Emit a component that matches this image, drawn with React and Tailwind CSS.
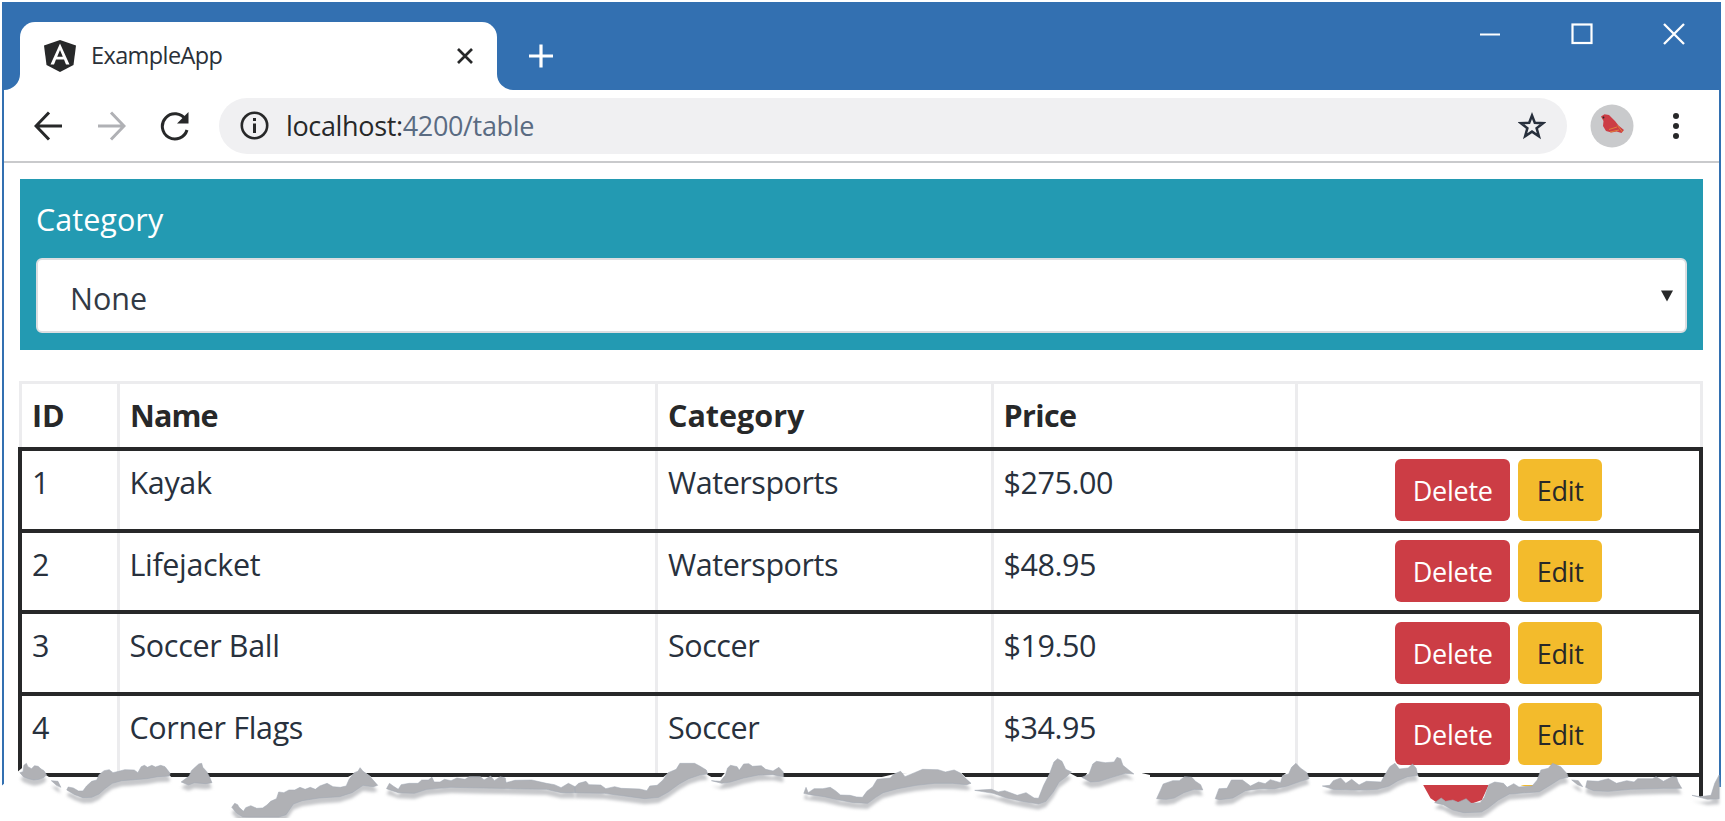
import React from "react";

const products = [
  { id: 1, name: "Kayak", category: "Watersports", price: "$275.00" },
  { id: 2, name: "Lifejacket", category: "Watersports", price: "$48.95" },
  { id: 3, name: "Soccer Ball", category: "Soccer", price: "$19.50" },
  { id: 4, name: "Corner Flags", category: "Soccer", price: "$34.95" },
];

function TitleBar() {
  return (
    <div className="flex h-[88px] items-start bg-[#3370b1]">
      <div className="relative ml-[18px] mt-5 flex h-[68px] w-[477px] items-center rounded-t-[15px] bg-white pl-[23px]">
        <svg className="absolute -left-[16px] bottom-0" width="16" height="16" viewBox="0 0 16 16">
          <path d="M16 0V16H0A16 16 0 0 0 16 0Z" fill="#fff" />
        </svg>
        <svg className="absolute -right-[16px] bottom-0" width="16" height="16" viewBox="0 0 16 16">
          <path d="M0 0V16H16A16 16 0 0 1 0 0Z" fill="#fff" />
        </svg>
        <svg width="34" height="34" viewBox="0 0 34 34">
          <path d="M17 1 33 6.5 30.5 26 17 33 3.500 26 1 6.500Z" fill="#272829" />
          <path d="M17 4.500 7.500 25.500H11L13 20.500H21L23 25.500H26.500ZM17 11 19.800 17.700H14.200Z" fill="#fff" fillRule="evenodd" />
        </svg>
        <span className="ml-[14px] text-[23.5px] tracking-[-0.6px] text-[#2a3038]">ExampleApp</span>
        <svg className="ml-auto mr-[24px]" width="16" height="16" viewBox="0 0 16 16" stroke="#272829" strokeWidth="2.7">
          <path d="M1 1 15 15M15 1 1 15" />
        </svg>
      </div>
      <svg className="ml-[32px] mt-[42px]" width="24" height="24" viewBox="0 0 24 24" stroke="#fff" strokeWidth="3.2">
        <path d="M12 0.500V23.500M0 12H24" />
      </svg>
      <div className="ml-auto mr-[36px] mt-[21px] flex items-center gap-[70px]">
        <svg width="22" height="22" viewBox="0 0 22 22" stroke="#fff" strokeWidth="2">
          <path d="M1 11.500H21" />
        </svg>
        <svg width="22" height="22" viewBox="0 0 22 22" stroke="#fff" strokeWidth="2.2" fill="none">
          <rect x="1.500" y="1.500" width="19" height="18.500" />
        </svg>
        <svg width="22" height="22" viewBox="0 0 22 22" stroke="#fff" strokeWidth="2.300">
          <path d="M1 1 21 21M21 1 1 21" />
        </svg>
      </div>
    </div>
  );
}

function ToolBar() {
  return (
    <div className="flex h-[73px] items-center border-b-2 border-[#c9cacc] pl-[30px]">
      <svg width="28" height="30" viewBox="0 0 28 30" fill="none" stroke="#272829" strokeWidth="3">
        <path d="M28 15H2.500M15 1.500 2 15 15 28.500" />
      </svg>
      <svg className="ml-[36px]" width="28" height="30" viewBox="0 0 28 30" fill="none" stroke="#b0b1b5" strokeWidth="3">
        <path d="M0 15H25.500M13 1.500 26 15 13 28.500" />
      </svg>
      <svg className="ml-[34px]" width="30" height="30" viewBox="0 0 30 30">
        <path d="M25.500 8.500A12.600 12.600 0 1 0 27 19" fill="none" stroke="#272829" strokeWidth="3" />
        <path d="M28.500 1V12.500H17Z" fill="#272829" />
      </svg>
      <div className="ml-[29px] flex h-14 w-[1348px] items-center rounded-full bg-[#f0f0f2] pl-[21px] pr-[21px]">
        <svg width="29" height="29" viewBox="0 0 29 29">
          <circle cx="14.500" cy="14.500" r="12.700" fill="none" stroke="#272829" strokeWidth="2.600" />
          <path d="M14.500 12.500V22" stroke="#272829" strokeWidth="3" />
          <path d="M14.500 7V10" stroke="#272829" strokeWidth="3" />
        </svg>
        <span className="ml-[17px] pt-px text-[27px] tracking-[-0.35px] text-[#5a6b82]">
          <span className="text-[#272829]">localhost:</span>4200/table
        </span>
        <svg className="ml-auto" width="28" height="28" viewBox="0 0 28 28">
          <path d="M14 3.500 16.800 10.800 25 11.200 18.600 16.200 20.900 24.200 14 19.600 7.100 24.200 9.400 16.200 3 11.200 11.200 10.800Z" fill="none" stroke="#272f3c" strokeWidth="2.500" />
        </svg>
      </div>
      <svg className="ml-[23px]" width="44" height="44" viewBox="0 0 44 44">
        <circle cx="22" cy="22" r="21.500" fill="#c9cacc" />
        <path d="M11 12.500 14.500 10.200 19 11 25 17 28.500 21.500 34 26 31.500 29 26.500 27.500 21.500 28.500 16 27 13 22 13.500 17Z" fill="#cc3d45" />
        <path d="M19 25.500 27 23M20 28 29 26M27.500 21.500 32.500 28" stroke="#e0803a" strokeWidth="1" />
        <circle cx="13.500" cy="13.500" r="0.900" fill="#272829" />
      </svg>
      <svg className="ml-[38px]" width="8" height="30" viewBox="0 0 8 30" fill="#272829">
        <circle cx="4" cy="5" r="3" />
        <circle cx="4" cy="15" r="3" />
        <circle cx="4" cy="25" r="3" />
      </svg>
    </div>
  );
}

function CategoryFilter() {
  return (
    <div className="ml-4 mt-4 flex h-[171px] w-[1683px] flex-col bg-[#239ab2] px-4">
      <div className="mt-[17px] text-[30.5px] leading-[46px] tracking-[0.05px] text-white">Category</div>
      <div className="mt-4 flex h-[75px] items-center justify-between rounded-md border-2 border-[#dcdee1] bg-white pl-[32px] pr-[11px]">
        <span className="pt-[5px] text-[30.5px] leading-[46px] text-[#323a45]">None</span>
        <svg width="14" height="12" viewBox="0 0 14 12">
          <path d="M1 0.500H13L7 11.500Z" fill="#272829" />
        </svg>
      </div>
    </div>
  );
}

function Row({ children, actions }) {
  const [id, name, category, price] = children;
  return (
    <div className="grid h-[81.5px] shrink-0 grid-cols-[98px_538px_335.5px_304px_1fr] border-b-4 border-[#272829] text-[30.5px] leading-[46px] tracking-[-0.45px] text-[#28313d]">
      <div className="border-r-[3px] border-[#ececee] pl-[10px] pt-2">{id}</div>
      <div className="border-r-[3px] border-[#ececee] pl-[9.5px] pt-2 tracking-[-0.35px]">{name}</div>
      <div className="border-r-[3px] border-[#ececee] pl-[10px] pt-2">{category}</div>
      <div className="border-r-[3px] border-[#ececee] pl-[10px] pt-2">{price}</div>
      <div className="flex items-start justify-center gap-2 pt-[7.5px] text-[27px]">{actions}</div>
    </div>
  );
}

function ProductRow({ product }) {
  return (
    <Row
      actions={
        <>
          <button className="h-[62px] w-[115px] rounded-md bg-[#cc3d45] pl-px pt-[2px] tracking-[-0.25px] text-white">Delete</button>
          <button className="h-[62px] w-[84px] rounded-md bg-[#f3bb2c] pl-px pt-[2px] tracking-[-0.25px] text-[#272829]">Edit</button>
        </>
      }
    >
      {[product.id, product.name, product.category, product.price]}
    </Row>
  );
}

function ProductTable() {
  return (
    <div className="ml-[14px] mt-[31px] w-[1685px]">
      <div className="ml-px grid h-[66px] grid-cols-[101px_538px_335.5px_304px_1fr] border-t-[3px] border-[#ececee] text-[30.5px] leading-[46px] font-bold tracking-[-0.2px] text-[#272829]">
        <div className="border-x-[3px] border-[#ececee] pl-[10px] pt-2">ID</div>
        <div className="border-r-[3px] border-[#ececee] pl-[10px] pt-2 tracking-[-0.9px]">Name</div>
        <div className="border-r-[3px] border-[#ececee] pl-[10px] pt-2 tracking-normal">Category</div>
        <div className="border-r-[3px] border-[#ececee] pl-[10px] pt-2 tracking-[-0.6px]">Price</div>
        <div className="border-r-[3px] border-[#ececee]" />
      </div>
      <div className="flex h-[364px] flex-col overflow-hidden border-x-4 border-t-4 border-[#272829]">
        {products.map((p) => (
          <ProductRow key={p.id} product={p} />
        ))}
        <Row
          actions={
            <>
              <div className="h-[62px] w-[115px] rounded-md bg-[#cc3d45]" />
              <div className="h-[62px] w-[84px] rounded-md bg-[#f3bb2c]" />
            </>
          }
        >
          {["", "", "", ""]}
        </Row>
      </div>
    </div>
  );
}

// Outline of the torn paper edge, in three strips of 575px drawn on a 1568 x 303 grid.
const strips = [
  {
    x: 0,
    paper: "M0 202 48 155 70 135 95 150 125 165 160 190 205 210 270 170 320 160 440 140 470 175 500 190 545 135 575 180 610 176 640 176 700 176 790 176 940 176 985 150 1005 165 1050 200 1110 190 1170 172 1290 170 1380 172 1568 172V303H0Z",
    gray: [
      "M54 158 63 155 65 136 72 130 76 140 86 146 94 137 104 139 112 147 120 152 127 164 120 172 106 178 92 180 78 176 64 170Z",
      "M140 182 158 184 166 202 154 196Z",
      "M182 210 186 201 200 204 214 213 226 213 236 198 250 184 264 180 270 164 284 152 298 149 308 158 324 154 340 149 366 150 376 158 385 140 394 136 402 142 414 136 424 141 438 136 450 140 464 160 462 168 430 170 400 176 356 180 332 182 306 190 286 206 270 222 250 232 226 233 204 224Z",
      "M494 186 516 168 522 152 532 142 542 132 550 130 553 142 564 155 572 172 578 188 560 191 530 188 514 195Z",
      "M632 262 640 250 648 254 652 262 664 274 670 263 684 257 700 265 716 264 728 255 738 244 754 236 760 216 774 218 788 210 804 210 818 202 832 208 846 202 860 208 872 198 892 190 908 200 928 202 944 198 952 178 966 158 976 154 982 143 990 154 1006 166 1030 196 1018 200 990 196 960 218 926 230 870 234 824 242 800 252 780 284 760 291 662 291 646 280Z",
      "M1054 206 1062 190 1072 198 1086 208 1094 194 1116 190 1140 190 1150 180 1168 180 1178 172 1184 186 1200 186 1212 178 1230 182 1246 174 1268 178 1280 170 1310 170 1320 180 1338 168 1348 182 1364 170 1378 174 1380 188 1404 181 1450 180 1490 190 1512 194 1530 203 1550 190 1568 200V218H1530L1490 208 1450 207 1320 204 1230 202 1164 208 1130 220 1086 218Z",
    ],
  },
  {
    x: 575,
    paper: "M0 172H240L280 138 340 138 362 165 390 182 420 145 550 145 570 173 610 210 640 220 780 230 825 174 880 160 1050 155 1080 188 1120 210 1260 235 1290 170 1316 122 1350 160 1385 180 1410 135 1475 122 1510 150 1568 165V303H0Z",
    gray: [
      "M0 200 10 190 30 184 38 194 70 195 84 206 108 200 126 205 176 207 196 212 204 198 224 196 240 180 254 158 276 148 286 130 326 130 340 138 358 150 362 162 340 165 310 176 284 192 254 216 228 232 190 236 150 230 80 220 0 218Z",
      "M372 182 396 184 410 166 416 144 424 136 442 140 448 151 460 132 474 131 484 139 508 137 520 148 540 153 556 142 568 156 568 170 540 164 500 165 460 174 424 186 400 190Z",
      "M624 220 630 202 636 218 652 206 676 206 696 202 710 212 724 225 750 226 768 231 784 232 796 214 812 200 824 178 860 174 870 162 888 154 900 170 926 158 948 148 990 149 1010 156 1034 150 1052 160 1062 172 1080 190 1068 194 1030 190 980 190 930 196 880 206 840 218 820 232 798 250 760 248 720 240 680 230 640 224Z",
      "M1090 211 1136 208 1154 216 1172 212 1206 226 1230 218 1252 234 1264 235 1278 196 1294 162 1306 126 1316 116 1328 124 1338 148 1354 156 1342 168 1320 186 1304 216 1284 244 1264 252 1220 244 1178 234 1140 220Z",
      "M1382 172 1402 162 1412 132 1422 124 1446 128 1470 126 1478 112 1488 116 1494 136 1510 150 1524 162 1500 160 1464 172 1430 184 1406 186Z",
    ],
  },
  {
    x: 1150,
    paper: "M0 176 20 230 60 180 105 172 180 235 220 185 350 180 398 132 440 182 500 195 560 190 630 186 660 140 715 135 740 185 765 235 785 250 830 245 880 250 905 240 925 192 980 195 1045 200 1070 150 1100 135 1140 170 1190 190 1290 175 1430 175 1455 205 1500 230 1560 215V303H0Z",
    gray: [
      "M18 236 28 212 36 192 62 182 80 182 94 170 114 172 124 184 138 194 144 210 120 208 92 218 66 234 44 238Z",
      "M178 236 188 206 210 205 222 180 252 180 274 198 296 186 314 191 328 179 356 188 362 166 378 162 386 142 398 130 410 144 428 158 434 176 410 184 374 198 340 206 300 206 260 212 226 234 190 239Z",
      "M470 198 490 196 500 182 520 174 534 190 550 178 570 195 590 184 630 186 640 166 654 140 668 130 680 147 704 144 716 132 726 145 730 166 702 170 676 182 652 198 620 208 570 210 500 208Z",
      "M776 248 794 234 806 244 826 240 840 247 862 236 876 250 900 248 912 232 924 194 940 186 964 190 974 202 992 191 1006 201 1042 198 1056 180 1066 150 1086 145 1098 130 1120 140 1138 162 1140 172 1118 177 1092 195 1062 215 1032 218 980 222 950 240 922 264 904 276 856 278 826 270 800 254Z",
      "M1150 180 1168 182 1180 200 1166 194Z",
      "M1188 202 1192 182 1222 184 1250 176 1272 190 1300 182 1320 186 1330 176 1370 176 1380 170 1400 184 1424 170 1436 172 1440 186 1450 205 1400 205 1310 208 1250 214 1210 212Z",
      "M1478 226 1500 230 1530 226 1540 190 1552 165V236L1520 238Z",
    ],
  },
];

function TornEdge() {
  return (
    <svg className="absolute left-0 top-[720px] overflow-hidden" width="1722" height="98" viewBox="0 0 1722 98">
      <defs>
        <filter id="soft" x="-5%" y="-20%" width="110%" height="150%">
          <feGaussianBlur stdDeviation="5" />
        </filter>
      </defs>
      {strips.map((s) => (
        <g key={s.x} transform={`translate(${s.x} 0) scale(0.36671 0.33333)`}>
          <path d={s.paper} fill="#fff" />
        </g>
      ))}
      {strips.map((s) => (
        <g key={s.x} transform={`translate(${s.x} 0) scale(0.36671 0.33333)`}>
          <g transform="translate(0 17)" fill="#c6c7ca" filter="url(#soft)">
            {s.gray.map((d) => (
              <path key={d} d={d} />
            ))}
          </g>
          {s.gray.map((d) => (
            <path key={d} d={d} fill="#b0b1b5" stroke="#a2a8b4" strokeWidth="1.500" />
          ))}
        </g>
      ))}
    </svg>
  );
}

export default function App() {
  return (
    <div className="relative h-[821px] w-[1725px] overflow-hidden bg-white pl-[2px] pt-[2px] font-['Open_Sans','Noto_Sans',sans-serif]">
      <div className="h-[785px] w-[1719px] bg-[#3370b1]">
        <TitleBar />
        <div className="mx-[2px] h-[708px] bg-white">
          <ToolBar />
          <CategoryFilter />
          <ProductTable />
        </div>
      </div>
      <TornEdge />
    </div>
  );
}
